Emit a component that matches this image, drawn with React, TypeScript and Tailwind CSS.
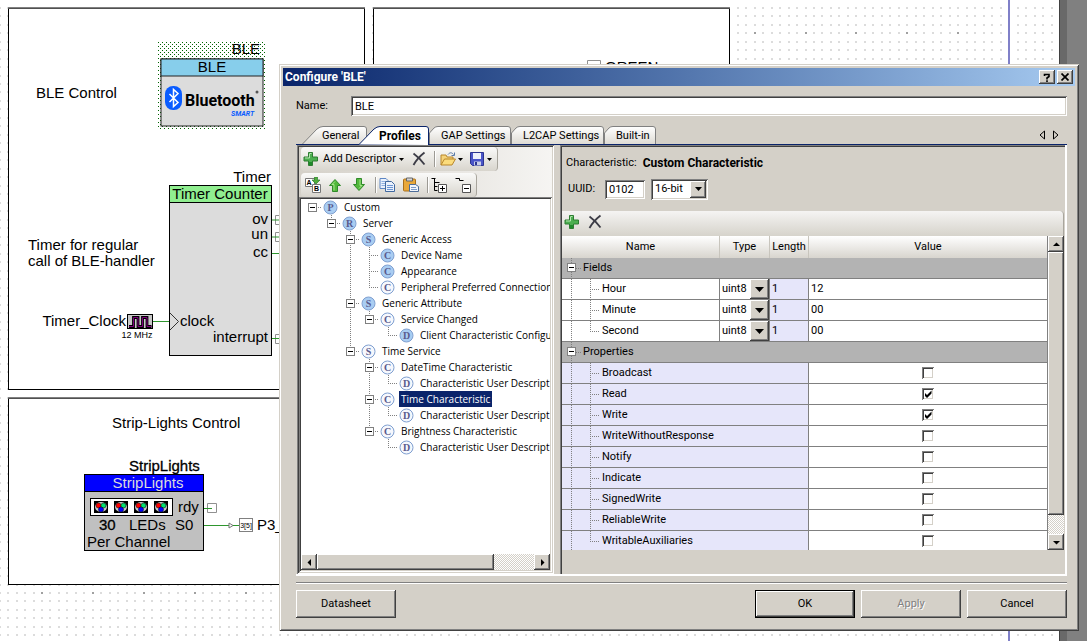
import type { ReactNode } from "react";

const raised =
  "bg-[#d4d0c8] shadow-[inset_-1px_-1px_#404040,inset_1px_1px_#ffffff,inset_-2px_-2px_#808080]";
const sunken =
  "shadow-[inset_1px_1px_#808080,inset_-1px_-1px_#ffffff,inset_2px_2px_#404040,inset_-2px_-2px_#d4d0c8]";
const hatch =
  "[background-image:repeating-conic-gradient(#ffffff_0_25%,#d4d0c8_0_50%)] bg-[length:2px_2px]";

/* ---------- schematic behind the dialog ---------- */

const gridDots = (major: boolean) => {
  let d = "";
  for (let i = -5; i < 120; i++) {
    for (let j = -70; j < 6; j++) {
      if ((i % 6 === 0 && j % 6 === 0) !== major) continue;
      const x = Math.round(41 + (i * 50.9) / 6);
      const y = Math.round(592 + (j * 50.9) / 6);
      d += `M${x} ${y}h2v2h-2z`;
    }
  }
  return d;
};

const Led = ({ x }: { x: number }) => (
  <g transform={`translate(${x} 501)`}>
    <rect width="14" height="12" fill="#000" />
    <ellipse cx="7" cy="6" rx="6" ry="5" fill="#c8c8c8" />
    <circle cx="4.5" cy="4.5" r="2.5" fill="#f00" stroke="#000" strokeWidth=".5" />
    <circle cx="9.5" cy="4.5" r="2.5" fill="#00e070" stroke="#000" strokeWidth=".5" />
    <circle cx="7" cy="8.5" r="2.5" fill="#00f" stroke="#000" strokeWidth=".5" />
  </g>
);

const wave = "M129 326.500h4.500v-9h4.500v9h4.500v-9h4.500v9h4.500";

const Schematic = () => (
  <svg
    className="absolute inset-0 w-full h-full [font-family:'Liberation_Sans',Arial,sans-serif] text-[15px]"
    fill="#000"
  >
    <defs>
      <pattern id="selection" width="4" height="4" patternUnits="userSpaceOnUse">
        <rect width="1" height="1" fill="#006400" />
        <rect x="2" y="2" width="1" height="1" fill="#006400" />
      </pattern>
    </defs>
    <rect width="1059" height="100%" fill="#fff" />
    <path d={gridDots(false)} fill="#dcdcdc" />
    <path d={gridDots(true)} fill="#a0a0a0" />
    <rect x="1008" width="2" height="100%" fill="#8080c8" />
    <rect x="1059" width="1" height="100%" fill="#404040" />
    <rect x="1060" width="7" height="100%" fill="#696969" />

    <g fill="#fff" stroke="#000" shapeRendering="crispEdges">
      <rect x="8.5" y="8.5" width="356" height="381" />
      <rect x="373.5" y="8.5" width="356" height="381" />
      <rect x="8.5" y="398.5" width="356" height="186" />
    </g>
    <path d="M8 7.500h357M373 7.500h357M8 397.500h357" stroke="#808080" />
    <path d="M8 8.500h357M373 8.500h357M8 398.500h357" stroke="#505050" />

    <text x="36" y="98">BLE Control</text>
    <text x="28" y="250">Timer for regular</text>
    <text x="28" y="266">call of BLE-handler</text>
    <text x="112" y="428">Strip-Lights Control</text>

    {/* BLE component */}
    <rect x="158" y="41" width="107" height="88" fill="url(#selection)" />
    <text x="260" y="54" textAnchor="end">BLE</text>
    <rect x="161" y="59" width="102" height="67" fill="#dcdcdc" stroke="#222" />
    <rect x="161" y="59" width="102" height="17" fill="#87ceeb" stroke="#222" />
    <text x="212" y="72" textAnchor="middle">BLE</text>
    <rect x="165" y="86" width="17" height="24" rx="8" fill="#0a5cff" />
    <path
      d="M169.500 94L178 102.500L173.500 106.500V89.500L178 93.500L169.500 102"
      fill="none"
      stroke="#fff"
      strokeWidth="1.500"
    />
    <text x="185" y="106" className="[font-family:Roboto,sans-serif] text-[16px] font-bold">
      Bluetooth
    </text>
    <circle cx="257" cy="92" r="1.500" fill="#555" />
    <text
      x="231"
      y="116"
      fill="#0a5cff"
      className="[font-family:Roboto,sans-serif] text-[7px] font-bold italic"
    >
      SMART
    </text>

    {/* Timer component */}
    <text x="271" y="182" textAnchor="end">Timer</text>
    <g stroke="#000" shapeRendering="crispEdges">
      <rect x="169.5" y="185.5" width="102" height="170" fill="#dcdcdc" />
      <rect x="169.5" y="185.5" width="102" height="17" fill="#90ee90" />
    </g>
    <text x="220" y="199" textAnchor="middle">Timer Counter</text>
    <text x="268" y="224" textAnchor="end">ov</text>
    <text x="268" y="239" textAnchor="end">un</text>
    <text x="268" y="257" textAnchor="end">cc</text>
    <text x="268" y="342" textAnchor="end">interrupt</text>
    <text x="180" y="326">clock</text>
    <path d="M170 313L178.500 321.500L170 330" fill="none" stroke="#333" />
    <path
      d="M275.500 215.500h8v9h-8zM275.500 232.500h8v9h-8zM275.500 334.500h8v9h-8z"
      fill="none"
      stroke="#909090"
    />
    <path
      d="M272 220h8M272 237h8M272 253.500h8M272 338.500h8M153 321.500h16"
      fill="none"
      stroke="#2e962e"
    />
    <text x="126" y="326" textAnchor="end">Timer_Clock</text>
    <rect x="127.500" y="314.500" width="25" height="14" fill="#c8c8c8" stroke="#000" />
    <path d={wave} fill="none" stroke="#000" strokeWidth="2.800" />
    <path d={wave} fill="none" stroke="#800080" />
    <text x="137" y="338" textAnchor="middle" className="text-[9px]">12 MHz</text>

    {/* StripLights component */}
    <text x="129" y="471" stroke="#000" strokeWidth=".3">StripLights</text>
    <g stroke="#000" shapeRendering="crispEdges">
      <rect x="84.5" y="474.5" width="119" height="76" fill="#c0c0c0" />
      <rect x="84.5" y="474.5" width="119" height="17" fill="#0000ff" />
      <rect x="90.5" y="498.5" width="82" height="17" fill="#fff" />
    </g>
    <text x="148" y="488" textAnchor="middle" fill="#dcdcdc">StripLights</text>
    <Led x={94} />
    <Led x={114} />
    <Led x={134} />
    <Led x={154} />
    <text x="178" y="512">rdy</text>
    <text x="99" y="530" stroke="#000" strokeWidth=".3">30</text>
    <text x="129" y="530">LEDs</text>
    <text x="175" y="530">S0</text>
    <text x="87" y="547">Per Channel</text>
    <path d="M207.500 503.500h9v9h-9z" fill="none" stroke="#909090" />
    <path d="M204 508.500h8M204 525.500h35" fill="none" stroke="#2e962e" />
    <path d="M229 523l4 2.500l-4 2.500z" fill="#fff" stroke="#777" />
    <rect x="239.500" y="518.500" width="13" height="13" fill="#fff" stroke="#808080" />
    <text x="246" y="528" textAnchor="middle" className="text-[7px]">3[5]</text>
    <text x="257" y="530">P3_</text>

    <path d="M587.500 70v-9.500h13v9.500" fill="none" stroke="#909090" />
    <text x="605" y="72">GREEN</text>
  </svg>
);

/* ---------- icons ---------- */

const Icon = ({ children }: { children: ReactNode }) => (
  <svg width="16" height="16" viewBox="0 0 16 16" fill="none" className="shrink-0">
    {children}
  </svg>
);

const PlusIcon = () => (
  <Icon>
    <path d="M5.500 1.500h4v4.500h5v4h-5v4.500h-4v-4.500h-4.500v-4h4.500z" fill="#4caf50" stroke="#2e7d32" />
    <path d="M6.500 2.500h2M2 7h4.500V3" stroke="#b5e6b0" />
    <path d="M6 11h3v3h-3z" fill="#1f8a2b" />
  </Icon>
);

const DeleteIcon = () => (
  <Icon>
    <path d="M1.500 2.500C5 5 9.500 9.500 12.500 13.500M12.500 1.500C8 5 4 9.500 1.500 14" stroke="#3c3c46" strokeWidth="1.800" />
  </Icon>
);

const FolderIcon = () => (
  <Icon>
    <path d="M1 14V4h5l1 2h6v3" fill="#f5d37a" stroke="#b8862b" />
    <path d="M1 14L4.500 8h11l-3.500 6z" fill="#fbdc7c" stroke="#b8862b" />
    <path d="M8 3.500c2-2.500 4-2 5.500 0M14.500 1.500v3h-3" stroke="#5a7ba8" />
  </Icon>
);

const SaveIcon = () => (
  <Icon>
    <path d="M1.500 1.500h13v13h-11l-2-2z" fill="#4a55c8" stroke="#2c3590" />
    <path d="M4 2h8v6H4z" fill="#eef1fb" />
    <path d="M5 10.500h7v4H5z" fill="#c9cfe8" />
    <path d="M6 11h2v3H6z" fill="#2c3590" />
  </Icon>
);

const SortIcon = () => (
  <Icon>
    <path d="M.5 1.500h9v8h-9z" fill="#fff" stroke="#777" />
    <path d="M7.500 7.500h8v8h-8z" fill="#fff" stroke="#777" />
    <text x="1.500" y="8" fill="#000" className="[font-family:'Liberation_Sans',sans-serif] text-[7px] font-bold">A</text>
    <text x="9" y="14" fill="#000" className="[font-family:'Liberation_Sans',sans-serif] text-[7px] font-bold">B</text>
    <path d="M9.500 0h3v3h2.500l-4 4-4-4h2.500z" fill="#4fae3c" stroke="#2e7d32" strokeWidth=".7" />
  </Icon>
);

const ArrowIcon = ({ down }: { down?: boolean }) => (
  <Icon>
    <g transform={down ? "rotate(180 8 8)" : undefined}>
      <path d="M8 2.500L13.500 8.500H10.500V14.500H5.500V8.500H2.500z" fill="#52b83a" stroke="#2f8a2a" />
      <path d="M7 13.500V7.500H5L8 4.500" stroke="#a6e48c" />
    </g>
  </Icon>
);

const CopyIcon = () => (
  <Icon>
    <path d="M1 1.500h6l2 2v8H1z" fill="#eaf1fc" stroke="#5c86c4" />
    <path d="M2.500 4.500h4M2.500 6.500h4M2.500 8.500h4" stroke="#8fb0e0" />
    <path d="M6.500 4.500h6l3 3v7h-9z" fill="#eaf1fc" stroke="#41699f" />
    <path d="M8 8.500h6M8 10.500h6M8 12.500h6" stroke="#6c96d4" />
  </Icon>
);

const PasteIcon = () => (
  <Icon>
    <rect x=".5" y="2" width="12" height="12" rx="1" fill="#e9a83a" stroke="#a8701c" />
    <path d="M3.500 1h6v3h-6z" fill="#d5d5d5" stroke="#666" />
    <path d="M6.500 7.500h6l3 2v5h-9z" fill="#f3f6fb" stroke="#4d6c98" />
    <path d="M8 10.500h5M8 12.500h6" stroke="#7d9cc8" />
  </Icon>
);

const ExpandIcon = () => (
  <Icon>
    <path d="M.5 1.500h4M3.500 1.500v12h3M3.500 5.500h5M3.500 9.500h3" stroke="#000" />
    <path d="M7.500 7.500h8v8h-8z" fill="#fff" stroke="#555" />
    <path d="M9 11.500h5M11.500 9v5" stroke="#000" />
  </Icon>
);

const CollapseIcon = () => (
  <Icon>
    <path d="M.5 1.500h4v2h4" stroke="#000" />
    <path d="M7.500 7.500h8v8h-8z" fill="#fff" stroke="#555" />
    <path d="M9 11.500h5" stroke="#000" />
  </Icon>
);

const Caret = () => (
  <svg width="5" height="3" className="shrink-0">
    <path d="M0 0h5L2.500 3z" />
  </svg>
);

const Separator = () => (
  <span className="w-0.5 h-4 border-l border-[#9c9a94] bg-white shrink-0" />
);

/* ---------- tabs ---------- */

const tabs = [
  { name: "General", width: 65, slant: true, look: "w-[65px] pl-5 -mr-2" },
  { name: "Profiles", width: 70, slant: true, active: true, look: "w-[70px] pl-5 -mb-px z-10 font-bold text-[12px]" },
  { name: "GAP Settings", width: 82, look: "w-[82px] pl-3" },
  { name: "L2CAP Settings", width: 93, look: "w-[93px] pl-3" },
  { name: "Built-in", width: 52, look: "w-[52px] pl-3" },
];

const Tabs = () => (
  <div role="tablist" className="flex items-start h-[19px] pl-1.5 border-b border-[#0a246a]">
    {tabs.map(({ name, width: w, slant, active, look }) => (
      <button
        key={name}
        role="tab"
        aria-selected={!!active}
        className={`relative text-left whitespace-nowrap leading-[20px] ${active ? "h-[19px]" : "h-[18px]"} ${look}`}
      >
        <svg className="absolute inset-0 w-full h-full -z-10" fill={active ? "#fff" : "url(#tabFill)"}>
          <defs>
            <linearGradient id="tabFill" x2="0" y2="1">
              <stop stopColor="#fff" />
              <stop offset="1" stopColor="#dcd9d2" />
            </linearGradient>
          </defs>
          <path
            d={`${slant ? "M0 18.5L15 3Q18 .5 21 .5" : "M.5 19V7L5 2Q6.500 .5 9 .5"}H${w - 3}Q${w - 0.5} .5 ${w - 0.5} 3V19`}
            stroke={active ? "#0a246a" : "#808080"}
          />
        </svg>
        {name}
      </button>
    ))}
    <span className="flex gap-2 ml-auto mr-2 mt-1">
      <button aria-label="Previous tab">
        <svg width="6" height="10" fill="none" stroke="#000">
          <path d="M5.500 1v8L1 5z" />
        </svg>
      </button>
      <button aria-label="Next tab">
        <svg width="6" height="10" fill="none" stroke="#000">
          <path d="M.5 1v8L5 5z" />
        </svg>
      </button>
    </span>
  </div>
);

/* ---------- profile tree ---------- */

type Node = { kind: string; label: string; filled?: boolean; selected?: boolean; children?: Node[] };

const description: Node = { kind: "D", label: "Characteristic User Descript" };

const profile: Node = {
  kind: "P",
  label: "Custom",
  filled: true,
  children: [
    {
      kind: "R",
      label: "Server",
      filled: true,
      children: [
        {
          kind: "S",
          label: "Generic Access",
          filled: true,
          children: [
            { kind: "C", label: "Device Name", filled: true },
            { kind: "C", label: "Appearance", filled: true },
            { kind: "C", label: "Peripheral Preferred Connection" },
          ],
        },
        {
          kind: "S",
          label: "Generic Attribute",
          filled: true,
          children: [
            {
              kind: "C",
              label: "Service Changed",
              children: [{ kind: "D", label: "Client Characteristic Configu", filled: true }],
            },
          ],
        },
        {
          kind: "S",
          label: "Time Service",
          children: [
            { kind: "C", label: "DateTime Characteristic", children: [description] },
            { kind: "C", label: "Time Characteristic", selected: true, children: [description] },
            { kind: "C", label: "Brightness Characteristic", children: [description] },
          ],
        },
      ],
    },
  ],
};

const TreeItem = ({ node, last, guides }: { node: Node; last: boolean; guides: boolean[] }) => {
  const root = guides.length === 0;
  return (
    <li role="treeitem" aria-selected={!!node.selected}>
      <div className="flex h-4 items-center whitespace-nowrap">
        {guides.map((line, i) => (
          <svg key={i} width="19" height="16" className="shrink-0">
            {line && <path d="M9.500 0v16" stroke="#808080" strokeDasharray="1 1" />}
          </svg>
        ))}
        <svg width="19" height="16" className="shrink-0" fill="#fff" stroke="#808080">
          <path
            d={`${root ? "" : `M9.500 0V${last ? 8 : 16}`}M9 8.500H19`}
            strokeDasharray="1 1"
          />
          {node.children && (
            <>
              <rect x="5.5" y="4.5" width="8" height="8" />
              <path d="M7 8.500h5" stroke="#000" />
            </>
          )}
        </svg>
        <svg width="15" height="15" className="shrink-0 ml-px mr-1">
          <circle cx="7.500" cy="7.500" r="6.500" fill={node.filled ? "#a9cdf2" : "#f6f8fd"} stroke="#7f9fd0" />
          <text
            x="7.500"
            y="11"
            textAnchor="middle"
            fill="#5a5a8c"
            className="[font-family:'Liberation_Serif',serif] text-[10px] font-bold"
          >
            {node.kind}
          </text>
        </svg>
        <span className={`px-0.5 leading-4 ${node.selected ? "bg-[#0a246a] text-white" : ""}`}>
          {node.label}
        </span>
      </div>
      {node.children && (
        <ul role="group">
          {node.children.map((child, i) => (
            <TreeItem
              key={child.label}
              node={child}
              last={i === node.children!.length - 1}
              guides={[...guides, !last]}
            />
          ))}
        </ul>
      )}
    </li>
  );
};

const ScrollArrow = ({ d, label }: { d: string; label: string }) => (
  <button aria-label={label} className={`grid place-items-center size-4 shrink-0 ${raised}`}>
    <svg width="7" height="7">
      <path d={d} />
    </svg>
  </button>
);

const ProfilePanel = () => (
  <section className={`flex flex-col w-[257px] shrink-0 p-0.5 bg-linear-to-r from-[#d4d0c8] to-[#f6f5f3] ${sunken}`}>
    <div className="flex flex-col items-start gap-0.5 pl-0.5">
      <div className="flex items-center h-6 w-[197px] pl-0.5 rounded-sm border-r border-[#a8a59d] bg-linear-to-b from-[#fafaf9] to-[#d8d5cd]">
        <button className="flex items-center gap-1 w-24 whitespace-nowrap">
          <PlusIcon />
          Add Descriptor
        </button>
        <button aria-label="More descriptors" className="mr-2">
          <Caret />
        </button>
        <button aria-label="Delete" className="mr-1.5">
          <DeleteIcon />
        </button>
        <Separator />
        <button aria-label="Load" className="flex items-center gap-0.5 ml-1 mr-1.5">
          <FolderIcon />
          <Caret />
        </button>
        <button aria-label="Save" className="flex items-center gap-0.5">
          <SaveIcon />
          <Caret />
        </button>
      </div>
      <div className="flex items-center h-6 w-[176px] pl-1 rounded-sm border-r border-[#a8a59d] bg-linear-to-b from-[#fafaf9] to-[#d8d5cd]">
        <button aria-label="Sort" className="mr-1.5"><SortIcon /></button>
        <button aria-label="Move up" className="mr-2"><ArrowIcon /></button>
        <button aria-label="Move down" className="mr-2"><ArrowIcon down /></button>
        <Separator />
        <button aria-label="Copy" className="ml-0.5 mr-2"><CopyIcon /></button>
        <button aria-label="Paste" className="mr-2"><PasteIcon /></button>
        <Separator />
        <button aria-label="Expand all" className="ml-0.5 mr-2"><ExpandIcon /></button>
        <button aria-label="Collapse all"><CollapseIcon /></button>
      </div>
    </div>
    <div className={`flex flex-col flex-1 p-0.5 bg-white ${sunken}`}>
      <ul role="tree" className="flex-1 pl-0.5 overflow-hidden [font-family:'Open_Sans','Noto_Sans',sans-serif] text-[10px]">
        <TreeItem node={profile} last guides={[]} />
      </ul>
      <div className={`flex ${hatch}`}>
        <ScrollArrow label="Scroll left" d="M5 0v7L1.500 3.500z" />
        <div className={`w-[177px] h-4 ${raised}`} />
        <span className="flex-1" />
        <ScrollArrow label="Scroll right" d="M2 0v7L5.500 3.500z" />
      </div>
    </div>
  </section>
);

/* ---------- characteristic panel ---------- */

const ComboBox = ({ label, options, look }: { label: string; options: string[]; look: string }) => (
  <span className={`relative flex bg-white ${look}`}>
    <select aria-label={label} className="appearance-none w-full outline-none pl-0.5">
      {options.map((option) => (
        <option key={option}>{option}</option>
      ))}
    </select>
    <span className={`absolute inset-y-0.5 right-0.5 w-4 grid place-items-center pointer-events-none ${raised}`}>
      <svg width="7" height="4">
        <path d="M0 0h7L3.500 4z" />
      </svg>
    </span>
  </span>
);

const GroupRow = ({ name }: { name: string }) => (
  <tr className="h-[21px] bg-[#b3b3b3]">
    <th colSpan={4} className="border-b border-[#808080] text-left font-normal">
      <div className="flex items-center h-5">
        <svg width="19" height="20" className="mr-0.5" fill="#fff" stroke="#808080">
          <path d="M9.500 0v20M14 10.500h5" strokeDasharray="1 1" />
          <rect x="5.5" y="5.5" width="8" height="8" />
          <path d="M7 9.500h5" stroke="#000" />
        </svg>
        {name}
      </div>
    </th>
  </tr>
);

const NameCell = ({ name, last }: { name: string; last: boolean }) => (
  <div className="flex items-center h-5">
    <svg width="38" height="20" className="mr-0.5" stroke="#808080">
      <path d={`M9.500 0v20M28.500 0V${last ? 10 : 20}M28 10.500h10`} strokeDasharray="1 1" />
    </svg>
    {name}
  </div>
);

const fields = [
  { name: "Hour", value: "12" },
  { name: "Minute", value: "00" },
  { name: "Second", value: "00" },
];

const properties = [
  "Broadcast",
  "Read",
  "Write",
  "WriteWithoutResponse",
  "Notify",
  "Indicate",
  "SignedWrite",
  "ReliableWrite",
  "WritableAuxiliaries",
];

const cell = "border-r border-b border-[#808080]";
const head =
  "border-r border-[#c8c5bd] last:border-0 bg-linear-to-b from-white to-[#d8d5ce] font-normal";

const PropertyGrid = () => (
  <div className="flex h-[314px] overflow-hidden">
    <div className="flex-1">
      <table className="w-full table-fixed border-separate border-spacing-0">
        <colgroup>
          <col className="w-[158px]" />
          <col className="w-[50px]" />
          <col className="w-[39px]" />
          <col />
        </colgroup>
        <thead>
          <tr className="h-[22px]">
            <th className={head}>Name</th>
            <th className={head}>Type</th>
            <th className={head}>Length</th>
            <th className={head}>Value</th>
          </tr>
        </thead>
        <tbody>
          <GroupRow name="Fields" />
          {fields.map(({ name, value }, i) => (
            <tr key={name} className="h-[21px] bg-white">
              <td className={cell}>
                <NameCell name={name} last={i === fields.length - 1} />
              </td>
              <td className={cell}>
                <span className="relative flex h-5">
                  <select aria-label={`${name} type`} className="appearance-none w-full outline-none pl-0.5">
                    <option>uint8</option>
                  </select>
                  <span className={`absolute inset-y-0 right-0 w-[19px] grid place-items-center pointer-events-none ${raised}`}>
                    <svg width="9" height="5">
                      <path d="M0 0h9L4.500 5z" />
                    </svg>
                  </span>
                </span>
              </td>
              <td className={`${cell} pl-0.5 bg-[#e6e6fa]`}>1</td>
              <td className="pl-0.5 border-b border-[#808080]">
                <input aria-label={`${name} value`} defaultValue={value} className="w-full outline-none" />
              </td>
            </tr>
          ))}
          <GroupRow name="Properties" />
          {properties.map((name, i) => {
            const checked = name === "Read" || name === "Write";
            return (
              <tr key={name} className="h-[21px] bg-[#e6e6fa]">
                <td colSpan={3} className={cell}>
                  <label htmlFor={name}>
                    <NameCell name={name} last={i === properties.length - 1} />
                  </label>
                </td>
                <td className="border-b border-[#808080] bg-white">
                  <span className="relative flex size-3 mx-auto">
                    <input
                      id={name}
                      type="checkbox"
                      defaultChecked={checked}
                      className={`appearance-none size-3 bg-white ${sunken}`}
                    />
                    {checked && (
                      <svg viewBox="0 0 12 12" className="absolute inset-0 pointer-events-none">
                        <path d="M3 5v3l2 2 4.500-4.500v-3L5 7z" />
                      </svg>
                    )}
                  </span>
                </td>
              </tr>
            );
          })}
        </tbody>
      </table>
    </div>
    <div className={`flex flex-col w-[17px] border-l border-[#808080] ${hatch}`}>
      <ScrollArrow label="Scroll up" d="M0 5h7L3.500 1.500z" />
      <div className={`h-[263px] ${raised}`} />
      <span className="flex-1" />
      <ScrollArrow label="Scroll down" d="M0 2h7L3.500 5.500z" />
    </div>
  </div>
);

const CharacteristicPanel = () => (
  <section className="flex-1 min-w-0 pl-0.5 pr-px pt-0.5 shadow-[inset_1px_1px_#808080,inset_2px_2px_#404040]">
    <p className="flex h-8 items-center pl-1 gap-1.5">
      Characteristic: <strong className="text-[12px]">Custom Characteristic</strong>
    </p>
    <div className="flex items-center h-5 pl-1.5 mb-3">
      <label htmlFor="uuid" className="w-[37px]">UUID:</label>
      <input id="uuid" defaultValue="0102" className={`w-10 h-[19px] px-1 mr-1.5 bg-white outline-none ${sunken}`} />
      <ComboBox label="UUID size" options={["16-bit", "128-bit"]} look={`w-[57px] h-[21px] p-0.5 ${sunken}`} />
    </div>
    <div className="flex items-center gap-2 h-[25px] pl-0.5 pb-1 rounded-tr border-r border-[#a8a59d] bg-linear-to-b from-[#f5f4f3] to-[#d6d3cb]">
      <button aria-label="Add field"><PlusIcon /></button>
      <button aria-label="Delete field"><DeleteIcon /></button>
    </div>
    <PropertyGrid />
  </section>
);

/* ---------- dialog ---------- */

const CaptionButton = ({ label, children }: { label: string; children: ReactNode }) => (
  <button aria-label={label} className={`grid place-items-center w-4 h-3.5 ${raised}`}>
    {children}
  </button>
);

const Dialog = () => (
  <div
    role="dialog"
    aria-labelledby="title"
    className="absolute z-10 left-[279px] right-2 top-16 p-1 pb-[13px] bg-[#d4d0c8] shadow-[inset_1px_1px_#d4d0c8,inset_-1px_-1px_#404040,inset_2px_2px_#ffffff,inset_-2px_-2px_#808080]"
  >
    <header className="flex items-center h-[18px] px-0.5 bg-linear-to-r from-[#0a246a] to-[#a6caf0]">
      <h1 id="title" className="flex-1 font-bold text-white text-[12px]">Configure 'BLE'</h1>
      <span className="flex gap-0.5">
        <CaptionButton label="Help">
          <svg width="8" height="9" fill="none" stroke="#000" strokeWidth="1.600">
            <path d="M1.500 3V1.500h4.500v2L4 5v1.500M4 7.300v1.700" />
          </svg>
        </CaptionButton>
        <CaptionButton label="Close">
          <svg width="8" height="8" stroke="#000" strokeWidth="1.700">
            <path d="M.5 .5l7 7M7.500 .5l-7 7" />
          </svg>
        </CaptionButton>
      </span>
    </header>
    <div className="isolate pl-[13px] pr-2">
      <div className="flex items-center my-2.5">
        <label htmlFor="name" className="w-[55px]">Name:</label>
        <input id="name" defaultValue="BLE" className={`flex-1 h-5 px-1 bg-white outline-none ${sunken}`} />
      </div>
      <Tabs />
      <div className="flex gap-1.5 pl-px pr-0.5 pb-0.5 h-[431px] shadow-[inset_-2px_-2px_#ffffff]">
        <ProfilePanel />
        <CharacteristicPanel />
      </div>
      <hr className="mt-1.5 h-0.5 border-t border-[#808080] bg-white" />
      <footer className="flex gap-1.5 mt-1.5">
        <button className={`w-[100px] h-7 mr-auto ${raised}`}>Datasheet</button>
        <button className={`w-[100px] h-7 border border-black ${raised}`}>OK</button>
        <button disabled className={`w-[100px] h-7 text-[#808080] [text-shadow:1px_1px_#ffffff] ${raised}`}>
          Apply
        </button>
        <button className={`w-[100px] h-7 ${raised}`}>Cancel</button>
      </footer>
    </div>
  </div>
);

const App = () => (
  <main className="relative min-h-screen overflow-hidden bg-[#808080] [font-family:Roboto,'Liberation_Sans',sans-serif] text-[11px] leading-4 text-black">
    <Schematic />
    <Dialog />
  </main>
);

export default App;
